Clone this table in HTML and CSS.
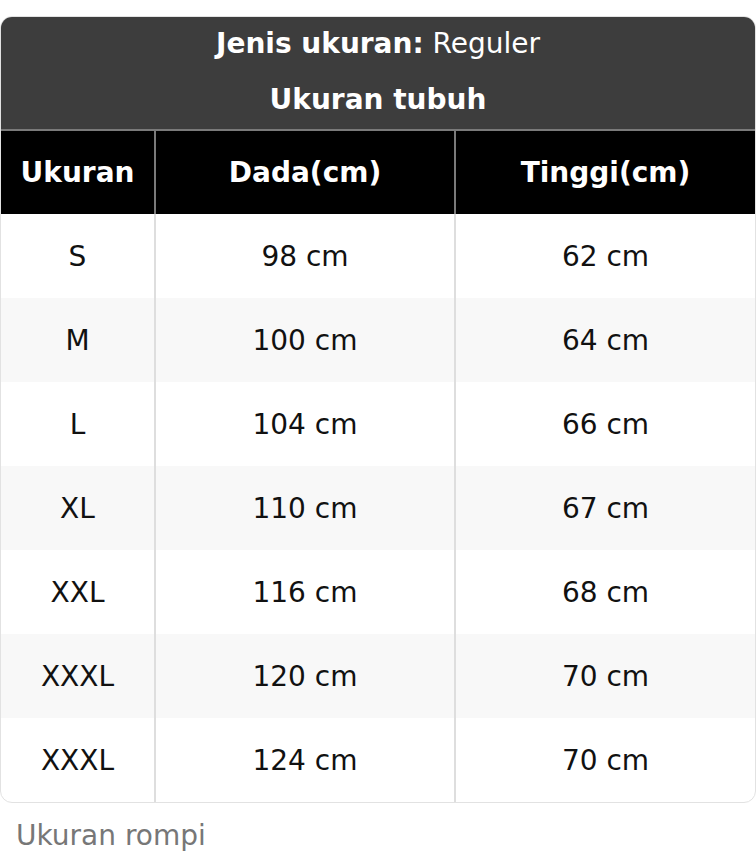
FILE: index.html
```html
<!DOCTYPE html>
<html>
<head>
<meta charset="utf-8">
<link rel="stylesheet" href="styles.css">
</head>
<body>
<div class="card">
  <table class="size-table">
    <colgroup>
      <col class="c1">
      <col class="c2">
      <col class="c3">
    </colgroup>
    <thead>
      <tr class="title-row"><th colspan="3" class="title"><b>Jenis ukuran:</b> Reguler</th></tr>
      <tr class="title-row"><th colspan="3" class="title"><b>Ukuran tubuh</b></th></tr>
      <tr class="head-row">
        <th>Ukuran</th>
        <th>Dada(cm)</th>
        <th>Tinggi(cm)</th>
      </tr>
    </thead>
    <tbody>
      <tr><td>S</td><td>98 cm</td><td>62 cm</td></tr>
      <tr><td>M</td><td>100 cm</td><td>64 cm</td></tr>
      <tr><td>L</td><td>104 cm</td><td>66 cm</td></tr>
      <tr><td>XL</td><td>110 cm</td><td>67 cm</td></tr>
      <tr><td>XXL</td><td>116 cm</td><td>68 cm</td></tr>
      <tr><td>XXXL</td><td>120 cm</td><td>70 cm</td></tr>
      <tr><td>XXXL</td><td>124 cm</td><td>70 cm</td></tr>
    </tbody>
  </table>
</div>
<p class="caption">Ukuran rompi</p>
</body>
</html>
```
FILE: styles.css
```css
html, body {
  margin: 0;
  padding: 0;
  background: #ffffff;
}
body {
  font-family: "DejaVu Sans", Verdana, sans-serif;
  font-size: 28px;
  color: #111111;
  padding-top: 16px;
}
.card {
  width: 756px;
  box-sizing: border-box;
  border: 1px solid #e2e2e2;
  border-radius: 12px;
  overflow: hidden;
}
.size-table {
  width: 100%;
  border-collapse: collapse;
  table-layout: fixed;
}
.c1 { width: 154px; }
.c2 { width: 300px; }
.c3 { width: auto; }
.title-row th {
  background: #3d3d3d;
  color: #ffffff;
  font-weight: normal;
  text-align: center;
  padding: 0 0 3px 0;
  height: 53px;
  vertical-align: middle;
}
.head-row th {
  background: #000000;
  color: #ffffff;
  font-weight: bold;
  height: 83px;
  padding: 0;
  border-top: 2px solid #7a7a7a;
  border-left: 2px solid #7a7a7a;
}
.head-row th:first-child {
  border-left: none;
}
.size-table td {
  height: 84px;
  padding: 0;
  text-align: center;
  border-left: 2px solid #dedede;
}
.size-table td:first-child {
  border-left: none;
}
.size-table tbody tr:nth-child(even) td {
  background: #f8f8f8;
}
.caption {
  margin: 16px 0 0 16px;
  color: #777777;
  font-size: 28px;
}
```
